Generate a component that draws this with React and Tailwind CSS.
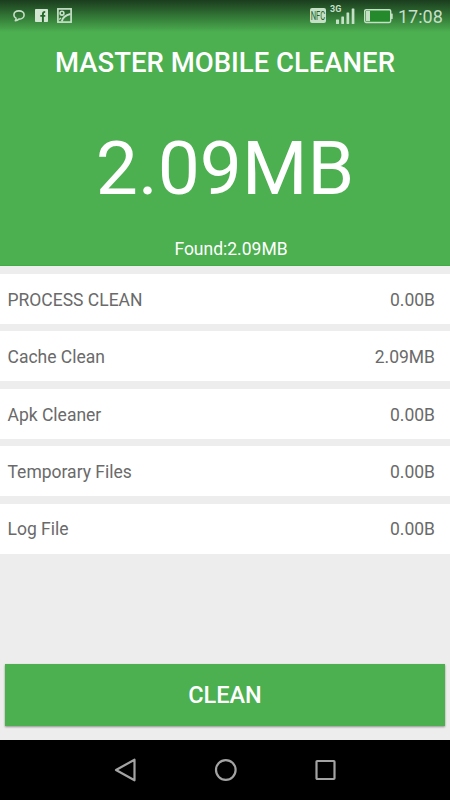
const ITEMS = [
  { name: 'PROCESS CLEAN', size: '0.00B' },
  { name: 'Cache Clean', size: '2.09MB' },
  { name: 'Apk Cleaner', size: '0.00B' },
  { name: 'Temporary Files', size: '0.00B' },
  { name: 'Log File', size: '0.00B' },
];

const ChatIcon = () => (
  <svg width="12" height="13" viewBox="0 0 12 13" fill="none" stroke="#c6dfc7" strokeWidth="1.6">
    <path d="M3 8.200C1.500 7.500.9 6.200.9 4.900.9 2.500 3 .9 5.900.9s5.200 1.600 5.200 4-2.300 4.200-5.200 4.200c-1 1-2.200 1.600-3.600 1.700.6-.7.9-1.500.7-2.600z" strokeLinejoin="round" />
  </svg>
);

const FacebookIcon = () => (
  <svg width="13" height="13" viewBox="0 0 13 13">
    <rect width="13" height="13" rx=".8" fill="#d3e6d3" />
    <path d="M7.900 13V5c0-1.500.8-2.100 2.300-2.100M5.300 6.900h5" fill="none" stroke="#23682a" strokeWidth="1.900" />
  </svg>
);

const PictureIcon = () => (
  <svg width="15" height="15" viewBox="0 0 15 15" fill="none" stroke="#c6dfc7">
    <rect x=".9" y=".9" width="13.200" height="13.200" strokeWidth="1.700" />
    <circle cx="5" cy="5.200" r="1.900" strokeWidth="1.600" />
    <path d="M4.800 13.500C5.500 9.800 8.500 7 13.500 6" strokeWidth="1.900" />
    <path d="M2 11.500l2-1.500" strokeWidth="1.200" />
  </svg>
);

const SignalIcon = () => (
  <svg width="20" height="16" viewBox="0 0 20 16" fill="#c6dfc7">
    <rect x="0" y="11.500" width="3" height="4.500" rx=".5" />
    <rect x="5.300" y="8.500" width="2.700" height="7.500" rx=".5" />
    <rect x="10.500" y="4.500" width="2.700" height="11.500" rx=".5" />
    <rect x="15.700" y=".5" width="2.700" height="15.500" rx=".5" />
  </svg>
);

const BatteryIcon = () => (
  <svg width="29" height="15" viewBox="0 0 29 15">
    <rect x=".7" y=".7" width="26" height="12.800" rx="1.400" fill="#258a2b" stroke="#c6dfc7" strokeWidth="1.400" />
    <rect x="2" y="2" width="4" height="10.200" fill="#c6dfc7" />
    <rect x="27" y="4.500" width="1.700" height="5.500" rx=".6" fill="#c6dfc7" />
  </svg>
);

const StatusBar = () => (
  <div className="flex h-8 items-start justify-between bg-linear-to-b from-[#1b3d1e] via-[#2f7033] via-45% to-[#4caf50] pl-[13px] pr-2 text-[#c6dfc7]">
    <div className="flex items-start pt-2">
      <div className="mt-[2px] mr-[10px]"><ChatIcon /></div>
      <div className="mt-px mr-[9px]"><FacebookIcon /></div>
      <PictureIcon />
    </div>
    <div className="flex items-start">
      <div className="mt-2 mr-1 flex h-[15px] w-4 items-center justify-center rounded-[2px] bg-[#c6dfc7]">
        <span className="scale-x-[0.56] text-[13.5px] leading-[15px] text-[#23682a]">NFC</span>
      </div>
      <div className="mt-1 h-5 w-1.5 text-[9px] leading-[10px] font-bold">3G</div>
      <div className="mt-2 mr-2"><SignalIcon /></div>
      <div className="mt-[9px] mr-[5px]"><BatteryIcon /></div>
      <span className="mt-[6px] w-[44px] text-[18px] leading-[21px] whitespace-nowrap">17:08</span>
    </div>
  </div>
);

const Row = ({ name, size }) => (
  <li className="flex h-[50px] items-center justify-between bg-white pt-[2px] pr-[15px] pl-[7.5px] text-[17.5px] text-[#6a6a6a]">
    <span>{name}</span>
    <span>{size}</span>
  </li>
);

const NavBar = () => (
  <nav className="flex h-[60px] items-center justify-center gap-[77px] bg-black">
    <svg width="23" height="26" viewBox="0 0 23 26" fill="none" stroke="#a3a3a3" strokeWidth="2.2">
      <path d="M20.500 2.700v20.600L2 13z" strokeLinejoin="round" />
    </svg>
    <svg width="23" height="24" viewBox="0 0 23 24" fill="none" stroke="#a3a3a3" strokeWidth="2.2">
      <circle cx="11.800" cy="12" r="9.800" />
    </svg>
    <svg width="23" height="24" viewBox="0 0 23 24" fill="none" stroke="#a3a3a3" strokeWidth="2.2">
      <rect x="2.500" y="3" width="18" height="18" rx=".7" />
    </svg>
  </nav>
);

export default function App() {
  return (
    <div className="flex h-[800px] w-[450px] flex-col overflow-hidden bg-[#ededed] font-['Roboto',sans-serif]">
      <header className="flex h-[266px] flex-col border-b border-[#3fab43] bg-[#4caf50] text-white">
        <StatusBar />
        <h1 className="mt-[15px] text-center text-[27.5px] leading-8 font-medium">MASTER MOBILE CLEANER</h1>
        <div className="mt-[45px] text-center text-[75px] leading-[88px]">2.09MB</div>
        <div className="mt-[27px] pl-3 text-center text-[17.5px] leading-5">Found:2.09MB</div>
      </header>
      <ul className="mt-2 flex flex-col gap-[7.4px]">
        {ITEMS.map((item) => (
          <Row key={item.name} name={item.name} size={item.size} />
        ))}
      </ul>
      <div className="mt-auto px-[5px] pb-[14px]">
        <button className="block h-[62px] w-full bg-[#4caf50] pt-[2px] text-[23.5px] font-medium text-white shadow-[0_1px_2px_rgba(0,0,0,0.4)]">
          CLEAN
        </button>
      </div>
      <NavBar />
    </div>
  );
}
